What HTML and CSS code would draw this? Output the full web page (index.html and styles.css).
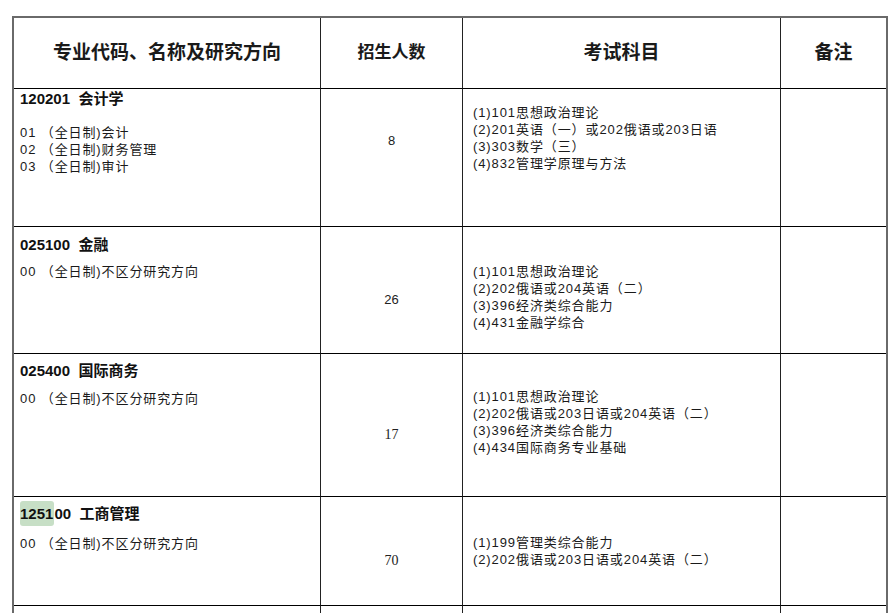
FILE: index.html
```html
<!DOCTYPE html>
<html lang="zh-CN">
<head>
<meta charset="utf-8">
<title>招生专业目录</title>
<link rel="stylesheet" href="styles.css">
</head>
<body>
<div class="sheet">
  <div class="cell head">专业代码、名称及研究方向</div>
  <div class="cell head head-sm">招生人数</div>
  <div class="cell head">考试科目</div>
  <div class="cell head last">备注</div>

  <div class="cell major r1">
    <div class="title">120201&nbsp; 会计学</div>
    <div class="items">
      <div>01 （全日制)会计</div>
      <div>02 （全日制)财务管理</div>
      <div>03 （全日制)审计</div>
    </div>
  </div>
  <div class="cell num r1">8</div>
  <div class="cell exam r1">
    <div>(1)101思想政治理论</div>
    <div>(2)201英语（一）或202俄语或203日语</div>
    <div>(3)303数学（三）</div>
    <div>(4)832管理学原理与方法</div>
  </div>
  <div class="cell last"></div>

  <div class="cell major r2">
    <div class="title">025100&nbsp; 金融</div>
    <div class="items">
      <div>00 （全日制)不区分研究方向</div>
    </div>
  </div>
  <div class="cell num r2">26</div>
  <div class="cell exam r2">
    <div>(1)101思想政治理论</div>
    <div>(2)202俄语或204英语（二）</div>
    <div>(3)396经济类综合能力</div>
    <div>(4)431金融学综合</div>
  </div>
  <div class="cell last"></div>

  <div class="cell major r3">
    <div class="title">025400&nbsp; 国际商务</div>
    <div class="items">
      <div>00 （全日制)不区分研究方向</div>
    </div>
  </div>
  <div class="cell num serif r3">17</div>
  <div class="cell exam r3">
    <div>(1)101思想政治理论</div>
    <div>(2)202俄语或203日语或204英语（二）</div>
    <div>(3)396经济类综合能力</div>
    <div>(4)434国际商务专业基础</div>
  </div>
  <div class="cell last"></div>

  <div class="cell major r4">
    <div class="title"><span class="mark">1251</span>00&nbsp; 工商管理</div>
    <div class="items">
      <div>00 （全日制)不区分研究方向</div>
    </div>
  </div>
  <div class="cell num serif r4">70</div>
  <div class="cell exam r4">
    <div>(1)199管理类综合能力</div>
    <div>(2)202俄语或203日语或204英语（二）</div>
  </div>
  <div class="cell last"></div>

  <div class="cell"></div>
  <div class="cell"></div>
  <div class="cell"></div>
  <div class="cell last"></div>
</div>
</body>
</html>
```

FILE: styles.css
```css
html, body {
  margin: 0;
  padding: 0;
  background: #fff;
}

body {
  font-family: "Liberation Sans", "Noto Sans CJK SC", sans-serif;
  color: #111;
  height: 613px;
  overflow: hidden;
}

.sheet {
  box-sizing: border-box;
  width: 876px;
  margin: 16px 0 0 12px;
  border: 2px solid #6a6a6a;
  border-bottom: none;
  display: grid;
  grid-template-columns: 307px 142px 318px 105px;
  grid-template-rows: 71px 138px 127px 143px 109px 60px;
}

.cell {
  box-sizing: border-box;
  border-right: 1px solid #222;
  border-bottom: 1px solid #000;
  min-width: 0;
}

.cell.last {
  border-right: none;
}

.head {
  display: flex;
  align-items: center;
  justify-content: center;
  font-family: "Noto Sans CJK SC", sans-serif;
  font-weight: 700;
  font-size: 19px;
  color: #1a1a1a;
  padding-bottom: 5px;
}

.head-sm {
  font-size: 17px;
}

.major {
  padding-left: 6px;
  font-size: 13px;
  line-height: 17px;
  letter-spacing: 0.9px;
}

.title {
  font-family: "Liberation Sans", "Noto Sans CJK SC", sans-serif;
  font-weight: 700;
  font-size: 15px;
  line-height: 20px;
  letter-spacing: 0;
  color: #111;
}

.mark {
  background: #c7dfc6;
  border-radius: 3px;
  padding: 4px 1px 4px 0;
}

.items {
  color: #1a1a1a;
}

.major.r1 { padding-top: 0; }
.major.r1 .items { margin-top: 15px; }
.major.r2 { padding-top: 8px; }
.major.r2 .items { margin-top: 8px; }
.major.r3 { padding-top: 7px; }
.major.r3 .items { margin-top: 9px; }
.major.r4 { padding-top: 7px; }
.major.r4 .items { margin-top: 11px; }

.num {
  text-align: center;
  font-size: 13px;
  line-height: 17px;
  color: #222;
}

.num.serif {
  font-family: "Liberation Serif", serif;
  font-size: 14px;
}

.num.r1 { padding-top: 43px; }
.num.r2 { padding-top: 64px; }
.num.r3 { padding-top: 72px; }
.num.r4 { padding-top: 55px; }

.exam {
  padding-left: 10px;
  font-size: 13px;
  line-height: 17px;
  letter-spacing: 0.9px;
  color: #1a1a1a;
}

.exam.r1 { padding-top: 15px; }
.exam.r2 { padding-top: 36px; }
.exam.r3 { padding-top: 34px; }
.exam.r4 { padding-top: 37px; }
```
